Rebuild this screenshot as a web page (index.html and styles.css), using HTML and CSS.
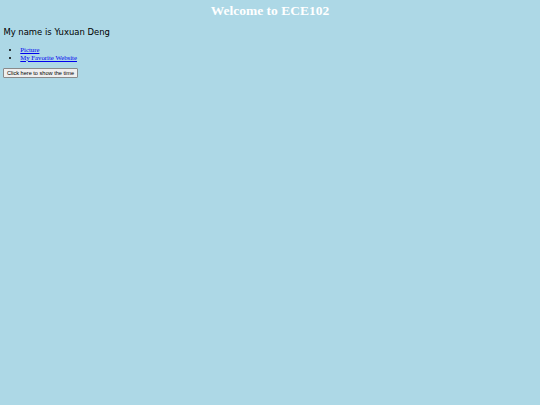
FILE: index.html
```html
<!DOCTYPE html>
<html>
<head>
<meta charset="utf-8">
<link rel="stylesheet" href="styles.css">
</head>
<body class="page">
<h1 class="title">Welcome to ECE102</h1>
<p class="intro">My name is Yuxuan Deng</p>
<ul class="links">
<li><a href="#">Picture</a></li>
<li><a href="#">My Favorite Website</a></li>
</ul>
<button class="time-btn">Click here to show the time</button>
</body>
</html>
```
FILE: styles.css
```css
html {
  background: #add8e6;
}
.page {
  margin: 3.4px;
  font-family: "Liberation Serif", serif;
  font-size: 6.75px;
  background: #add8e6;
}
.title {
  color: #ffffff;
  text-align: center;
  font-family: "Liberation Serif", serif;
  font-weight: bold;
  font-size: 13.5px;
  line-height: 15.5px;
  margin: 0 0 9px 0;
}
.intro {
  font-family: "DejaVu Sans", sans-serif;
  font-size: 8.45px;
  line-height: 9.8px;
  margin: 8.45px 0;
  color: #000;
}
.links {
  margin: 6.75px 0;
  padding-left: 16.9px;
  line-height: 7.8px;
}
.links a {
  color: #0000ee;
}
.time-btn {
  font-family: "Liberation Sans", sans-serif;
  font-size: 5.6px;
  line-height: 6.5px;
  padding: 0.5px 2.5px;
  margin: 0;
  border: 1px solid #8a8a8a;
  border-radius: 1px;
  background: #efefef;
  color: #000;
}
```
